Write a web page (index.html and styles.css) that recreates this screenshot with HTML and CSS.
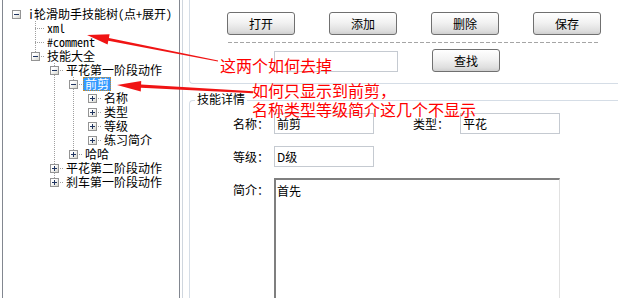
FILE: index.html
```html
<!DOCTYPE html>
<html>
<head>
  <meta charset="utf-8">
  <title>轮滑助手技能树</title>
  <link rel="stylesheet" href="styles.css">
</head>
<body>

<div class="app">

  <!-- 技能树 -->
  <div class="tree">
    <div class="node"><span class="g"><span class="box"><svg width="7" height="7"><path d="M1 3.5h5"/></svg></span></span><span class="text">i轮滑助手技能树(点+展开)</span></div>
    <div class="node"><span class="g"></span><span class="g t"></span><span class="text">xml</span></div>
    <div class="node"><span class="g"></span><span class="g t"></span><span class="text">#comment</span></div>
    <div class="node"><span class="g"></span><span class="g l"><span class="box"><svg width="7" height="7"><path d="M1 3.5h5"/></svg></span></span><span class="text">技能大全</span></div>
    <div class="node"><span class="g"></span><span class="g"></span><span class="g t"><span class="box"><svg width="7" height="7"><path d="M1 3.5h5"/></svg></span></span><span class="text">平花第一阶段动作</span></div>
    <div class="node"><span class="g"></span><span class="g"></span><span class="g v"></span><span class="g t"><span class="box"><svg width="7" height="7"><path d="M1 3.5h5"/></svg></span></span><span class="text sel">前剪</span></div>
    <div class="node"><span class="g"></span><span class="g"></span><span class="g v"></span><span class="g v"></span><span class="g h"><span class="box"><svg width="7" height="7"><path d="M1 3.5h5M3.5 1v5"/></svg></span></span><span class="text">名称</span></div>
    <div class="node"><span class="g"></span><span class="g"></span><span class="g v"></span><span class="g v"></span><span class="g h"><span class="box"><svg width="7" height="7"><path d="M1 3.5h5M3.5 1v5"/></svg></span></span><span class="text">类型</span></div>
    <div class="node"><span class="g"></span><span class="g"></span><span class="g v"></span><span class="g v"></span><span class="g h"><span class="box"><svg width="7" height="7"><path d="M1 3.5h5M3.5 1v5"/></svg></span></span><span class="text">等级</span></div>
    <div class="node"><span class="g"></span><span class="g"></span><span class="g v"></span><span class="g v"></span><span class="g h"><span class="box"><svg width="7" height="7"><path d="M1 3.5h5M3.5 1v5"/></svg></span></span><span class="text">练习简介</span></div>
    <div class="node"><span class="g"></span><span class="g"></span><span class="g v"></span><span class="g l"><span class="box"><svg width="7" height="7"><path d="M1 3.5h5M3.5 1v5"/></svg></span></span><span class="text">哈哈</span></div>
    <div class="node"><span class="g"></span><span class="g"></span><span class="g t"><span class="box"><svg width="7" height="7"><path d="M1 3.5h5M3.5 1v5"/></svg></span></span><span class="text">平花第二阶段动作</span></div>
    <div class="node"><span class="g"></span><span class="g"></span><span class="g l"><span class="box"><svg width="7" height="7"><path d="M1 3.5h5M3.5 1v5"/></svg></span></span><span class="text">刹车第一阶段动作</span></div>
  </div>

  <div class="split"></div>

  <div class="main">

    <!-- 工具栏 -->
    <div class="toolbar">
      <div class="btn-row">
        <button class="btn">打开</button>
        <button class="btn">添加</button>
        <button class="btn">删除</button>
        <button class="btn">保存</button>
      </div>
      <div class="dash"></div>
      <div class="search-row">
        <input type="text" class="search">
        <button class="btn find">查找</button>
      </div>
    </div>

    <!-- 技能详情 -->
    <fieldset class="detail">
      <legend>技能详情</legend>
      <div class="form">
        <label>名称：</label>
        <input type="text" value="前剪">
        <label class="col-type">类型：</label>
        <input type="text" value="平花">
        <label>等级：</label>
        <input type="text" value="D级">
        <label class="col-first top">简介：</label>
        <textarea>首先</textarea>
      </div>
    </fieldset>

  </div>
</div>

<!-- 标注 -->
<div class="notes">
  <svg class="arrows" width="618" height="298">
    <polygon points="87,35 109.6,34.2 108.9,37.9 218.1,60.5 217.9,61.5 108.3,40.7 107.6,44.4"/>
    <polygon points="117,85 141.2,81 141.1,84.4 253.1,91.2 252.9,93.2 140.9,87.8 140.8,91.4"/>
  </svg>
  <p class="note note1">这两个如何去掉</p>
  <p class="note note2">如何只显示到前剪，<br>名称类型等级简介这几个不显示</p>
</div>

</body>
</html>
```

FILE: styles.css
```css
body {
  margin: 0;
  font-family: "Noto Sans CJK SC", sans-serif;
  font-size: 12px;
  background: #fff;
  overflow: hidden;
}

.app {
  display: flex;
  height: 298px;
}

/* tree */

.tree {
  width: 178px;
  margin-left: 2px;
  padding: 7px 0 0 4px;
  box-sizing: border-box;
  border-left: 1px solid #828790;
  border-right: 1px solid #828790;
  font: 12px/14px "Noto Sans Mono CJK SC", "Noto Sans CJK SC", monospace;
  color: #000;
}

.node {
  display: flex;
  height: 14px;
  white-space: nowrap;
}

.g {
  flex: none;
  display: block;
  width: 19px;
  height: 14px;
  background-repeat: no-repeat;
}

.g.v {
  background-image: repeating-linear-gradient(#a0a0a0 0 1px, transparent 1px 2px);
  background-size: 1px 14px;
  background-position: 9px 0;
}

.g.t {
  background-image: repeating-linear-gradient(#a0a0a0 0 1px, transparent 1px 2px),
                    repeating-linear-gradient(to right, #a0a0a0 0 1px, transparent 1px 2px);
  background-size: 1px 14px, 10px 1px;
  background-position: 9px 0, 9px 7px;
}

.g.l {
  background-image: repeating-linear-gradient(#a0a0a0 0 1px, transparent 1px 2px),
                    repeating-linear-gradient(to right, #a0a0a0 0 1px, transparent 1px 2px);
  background-size: 1px 8px, 10px 1px;
  background-position: 9px 0, 9px 7px;
}

.g.h {
  background-image: repeating-linear-gradient(to right, #a0a0a0 0 1px, transparent 1px 2px);
  background-size: 10px 1px;
  background-position: 9px 7px;
}

.box {
  display: block;
  width: 9px;
  height: 9px;
  margin: 3px 0 0 5px;
  box-sizing: border-box;
  border: 1px solid #949494;
  background: linear-gradient(135deg, #fff 30%, #d6d6ce);
}

.box svg {
  display: block;
  stroke: #1f3460;
  stroke-width: 1;
  shape-rendering: crispEdges;
}

.text {
  padding: 0 1px;
  border: 1px solid transparent;
  line-height: 12px;
}

.text.sel {
  background: #3399ff;
  color: #fff;
  border: 1px dotted #c88a2a;
}

.split {
  width: 1px;
  margin: 0 6px 0 2px;
  background: #cfd6de;
}

/* right side */

.main {
  flex: 1;
  min-width: 0;
  display: flex;
  flex-direction: column;
  overflow: hidden;
}

.toolbar {
  height: 84px;
  box-sizing: border-box;
  padding: 12px 0 0 37px;
  border-left: 1px solid #d5dde6;
  border-bottom: 1px solid #d5dde6;
  border-bottom-left-radius: 4px;
}

.btn-row {
  display: flex;
  gap: 34px;
}

.btn {
  width: 68px;
  height: 23px;
  padding: 0;
  border: 1px solid #707070;
  border-radius: 3px;
  background: linear-gradient(#ffffff, #f2f2f2 45%, #dedede 85%, #cfcfcf);
  font-family: "Noto Sans CJK SC", sans-serif;
  font-size: 12px;
  color: #000;
}

.dash {
  width: 371px;
  height: 1px;
  margin: 7px 0 0 1px;
  background: repeating-linear-gradient(to right, #a5a5a5 0 4px, transparent 4px 6px);
}

.search-row {
  display: flex;
  margin-top: 6px;
}

.search {
  width: 124px;
  height: 21px;
  margin: 2px 0 0 47px;
  box-sizing: border-box;
  border: 1px solid #c5cad1;
}

.btn.find {
  margin-left: 34px;
}

.detail {
  flex: 1;
  min-width: 0;
  margin: 9px 0 0;
  padding: 5px 0 0;
  border: 1px solid #d5dde6;
  border-right: none;
  border-bottom: none;
  border-radius: 4px 0 0 0;
}

.detail legend {
  margin-left: 5px;
  padding: 0 2px 3px;
  font-size: 12px;
  line-height: 12px;
}

.form {
  display: grid;
  grid-template-columns: 41px 100px 39px 47px 100px;
  grid-auto-rows: 21px;
  row-gap: 12px;
  align-items: center;
  margin-left: 43px;
}

.form label {
  font-size: 12px;
  color: #000;
}

.form .col-type {
  grid-column: 4;
}

.form .col-first {
  grid-column: 1;
}

.form label.top {
  align-self: start;
  padding-top: 2px;
}

.form input {
  width: 100px;
  height: 21px;
  box-sizing: border-box;
  padding: 0 2px;
  border: 1px solid #c5cad1;
  font-family: "Noto Sans CJK SC", sans-serif;
  font-size: 12px;
}

.form textarea {
  grid-column: 2 / 6;
  align-self: start;
  height: 130px;
  margin-top: -1px;
  box-sizing: border-box;
  padding: 2px 1px;
  border-style: solid;
  border-width: 2px 1px 1px 2px;
  border-color: #7f7f7f #e1e1e1 #e1e1e1 #7f7f7f;
  resize: none;
  font-family: "Noto Sans CJK SC", sans-serif;
  font-size: 12px;
}

/* annotations */

.notes {
  position: absolute;
  left: 0;
  top: 0;
  width: 618px;
  height: 298px;
  pointer-events: none;
}

.arrows {
  position: absolute;
  left: 0;
  top: 0;
  fill: #f01414;
}

.note {
  position: absolute;
  margin: 0;
  color: #ff0000;
  font: 16px/19px "Noto Sans CJK SC", sans-serif;
  white-space: nowrap;
}

.note1 {
  left: 220px;
  top: 56px;
}

.note2 {
  left: 252px;
  top: 81px;
}
```
